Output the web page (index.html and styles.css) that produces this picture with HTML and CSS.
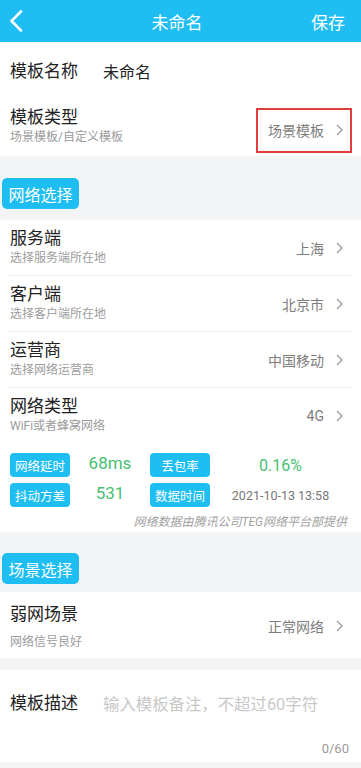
FILE: index.html
```html
<!DOCTYPE html>
<html lang="zh-CN">
<head>
<meta charset="utf-8">
<title>未命名</title>
<link rel="stylesheet" href="styles.css">
</head>
<body>
<div class="page">
  <header class="topbar">
    <span class="back">
      <svg width="14" height="22" viewBox="0 0 14 22"><polyline points="12,1.5 2.5,11 12,20.5" fill="none" stroke="#fff" stroke-width="2.6" stroke-linecap="round" stroke-linejoin="round"/></svg>
    </span>
    <span class="title">未命名</span>
    <span class="save">保存</span>
  </header>

  <section class="card">
    <div class="row row-name">
      <span class="row-title">模板名称</span>
      <span class="name-value">未命名</span>
    </div>
    <div class="row row-type">
      <div class="texts">
        <div class="row-title">模板类型</div>
        <div class="row-sub">场景模板/自定义模板</div>
      </div>
      <div class="value boxed">场景模板<svg class="chev" width="7" height="12" viewBox="0 0 7 12"><polyline points="1,1 6,6 1,11" fill="none" stroke="#9a9a9a" stroke-width="1.3"/></svg></div>
    </div>
  </section>

  <div class="section-head first"><span class="tag">网络选择</span></div>

  <section class="card">
    <div class="row item divided">
      <div class="texts">
        <div class="row-title">服务端</div>
        <div class="row-sub">选择服务端所在地</div>
      </div>
      <div class="value">上海<svg class="chev" width="7" height="12" viewBox="0 0 7 12"><polyline points="1,1 6,6 1,11" fill="none" stroke="#9a9a9a" stroke-width="1.3"/></svg></div>
    </div>
    <div class="row item divided">
      <div class="texts">
        <div class="row-title">客户端</div>
        <div class="row-sub">选择客户端所在地</div>
      </div>
      <div class="value">北京市<svg class="chev" width="7" height="12" viewBox="0 0 7 12"><polyline points="1,1 6,6 1,11" fill="none" stroke="#9a9a9a" stroke-width="1.3"/></svg></div>
    </div>
    <div class="row item divided">
      <div class="texts">
        <div class="row-title">运营商</div>
        <div class="row-sub">选择网络运营商</div>
      </div>
      <div class="value">中国移动<svg class="chev" width="7" height="12" viewBox="0 0 7 12"><polyline points="1,1 6,6 1,11" fill="none" stroke="#9a9a9a" stroke-width="1.3"/></svg></div>
    </div>
    <div class="row item">
      <div class="texts">
        <div class="row-title">网络类型</div>
        <div class="row-sub">WiFi或者蜂窝网络</div>
      </div>
      <div class="value">4G<svg class="chev" width="7" height="12" viewBox="0 0 7 12"><polyline points="1,1 6,6 1,11" fill="none" stroke="#9a9a9a" stroke-width="1.3"/></svg></div>
    </div>

    <div class="stats">
      <span class="stag">网络延时</span>
      <span class="sval green big">68ms</span>
      <span class="stag">丢包率</span>
      <span class="sval green">0.16%</span>
      <span class="stag">抖动方差</span>
      <span class="sval green big">531</span>
      <span class="stag">数据时间</span>
      <span class="sval date">2021-10-13 13:58</span>
    </div>
    <div class="source">网络数据由腾讯公司TEG网络平台部提供</div>
  </section>

  <div class="section-head second"><span class="tag">场景选择</span></div>

  <section class="card">
    <div class="row weak">
      <div class="texts">
        <div class="row-title">弱网场景</div>
        <div class="row-sub gap">网络信号良好</div>
      </div>
      <div class="value">正常网络<svg class="chev" width="7" height="12" viewBox="0 0 7 12"><polyline points="1,1 6,6 1,11" fill="none" stroke="#9a9a9a" stroke-width="1.3"/></svg></div>
    </div>
  </section>

  <section class="card desc">
    <div class="desc-line">
      <span class="row-title">模板描述</span>
      <span class="placeholder">输入模板备注，不超过60字符</span>
    </div>
    <div class="counter">0/60</div>
  </section>
</div>
</body>
</html>
```

FILE: styles.css
```css
* { box-sizing: border-box; }
html, body { margin: 0; padding: 0; }
body {
  background: #f3f4f6;
  font-family: Roboto, "Noto Sans CJK SC", sans-serif;
  color: #222;
}
.page { width: 361px; min-height: 768px; background: #f3f4f6; }

.topbar {
  height: 42px;
  background: #1ebef3;
  display: flex;
  align-items: center;
  justify-content: space-between;
  padding: 0 16px 0 9px;
  color: #fff;
}
.back { width: 40px; display: flex; align-items: center; }
.back svg { display: block; }
.title { font-size: 17px; }
.save { width: 40px; text-align: right; font-size: 17px; }

.card { background: #fff; }

.row {
  display: flex;
  align-items: center;
  justify-content: space-between;
  padding: 0 18px 0 10px;
}
.row-title { font-size: 17px; line-height: 22px; color: #222; }
.row-sub { font-size: 12px; line-height: 18px; color: #9c9c9c; }

.row-name { height: 58px; justify-content: flex-start; }
.name-value { font-size: 16px; margin-left: 25px; color: #222; }

.row-type { height: 56px; padding-right: 9px; }
.row-type .texts { padding-bottom: 4px; }

.value {
  display: flex;
  align-items: center;
  font-size: 14px;
  color: #7d7d7d;
}
.chev { margin-left: 12px; display: block; }

.boxed {
  border: 2px solid #e23d3d;
  width: 96px;
  height: 45px;
  padding: 0 7px 0 9px;
  justify-content: flex-end;
  margin-top: 4px;
}

.section-head { display: flex; padding-left: 2px; }
.section-head.first { padding-top: 22px; padding-bottom: 11px; }
.section-head.second { padding-top: 21px; padding-bottom: 8px; }
.tag {
  background: #1ebef3;
  color: #fff;
  font-size: 16px;
  width: 77px;
  height: 31px;
  border-radius: 5px;
  display: flex;
  align-items: center;
  justify-content: center;
}

.item { height: 56px; }
.item .texts { padding-bottom: 3px; }
.divided { position: relative; }
.divided::after {
  content: "";
  position: absolute;
  left: 8px;
  right: 8px;
  bottom: 0;
  height: 1px;
  background: #f0f0f0;
}

.stats {
  display: grid;
  grid-template-columns: 60px 80px 60px 1fr;
  row-gap: 6px;
  padding: 9px 10px 0;
  align-items: center;
}
.stag {
  background: #1ebef3;
  color: #fff;
  font-size: 12.5px;
  height: 24px;
  border-radius: 4px;
  display: flex;
  align-items: center;
  justify-content: center;
}
.sval { text-align: center; }
.green { color: #45bf72; font-size: 16px; }
.big { font-size: 17px; position: relative; top: -2px; }
.date { font-size: 12.5px; color: #777; }

.source {
  font-size: 12px;
  font-style: italic;
  color: #a2a2a2;
  text-align: right;
  padding: 7px 14px 2px 0;
  line-height: 16px;
}

.weak { height: 66px; }
.weak .texts { padding-top: 4px; }
.row-sub.gap { margin-top: 8px; }
.weak .value { margin-top: 2px; }

.desc { margin-top: 12px; height: 92px; padding: 21px 12px 0 10px; }
.desc-line { display: flex; align-items: center; }
.placeholder { margin-left: 25px; font-size: 16.4px; color: #c8c8c8; }
.counter { text-align: right; font-size: 13px; color: #9a9a9a; margin-top: 26px; }
```
